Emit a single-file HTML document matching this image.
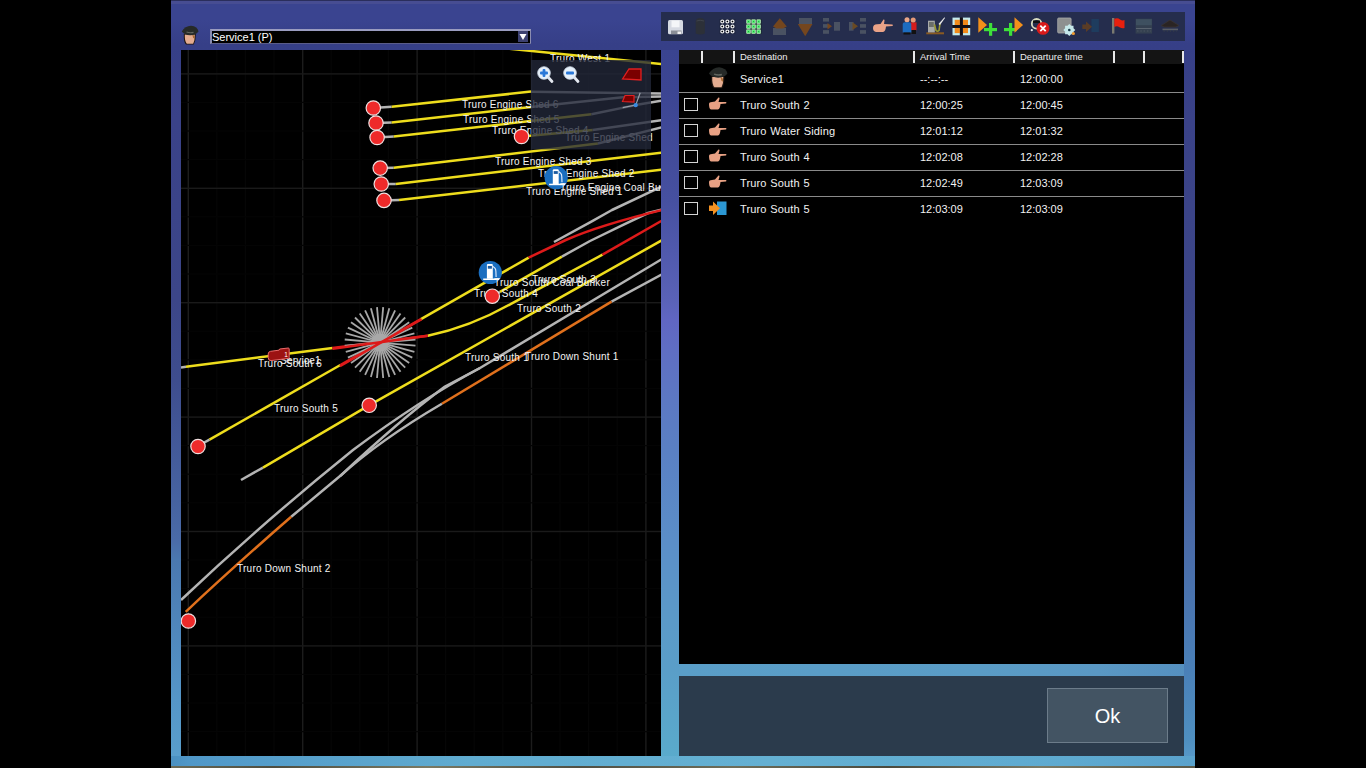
<!DOCTYPE html>
<html><head><meta charset="utf-8"><style>
*{margin:0;padding:0;box-sizing:border-box}
html,body{width:1366px;height:768px;overflow:hidden;background:#000;font-family:"Liberation Sans",sans-serif}
.abs{position:absolute}
#win{position:absolute;left:171px;top:0;width:1024px;height:766px;
 background:linear-gradient(to bottom,#3a4490 0px,#3a4490 20px,#363f87 45px,#3a4288 120px,#3c4688 300px,#3e4d8e 380px,#4a6ba8 540px,#4a80b8 670px,#4f8fc0 740px,#5a9ccc 766px);}
#ccol{position:absolute;left:661px;top:50px;width:18px;height:716px;
 background:linear-gradient(to bottom,#3a4490 0px,#3c4592 40px,#4650a0 150px,#5a62b8 250px,#6066c2 270px,#5f6ec4 300px,#5c78c4 350px,#5a80c4 400px,#5b8ec8 490px,#5b9ac8 570px,#5a9ec8 620px,#5aaccc 716px);}
#lmar{position:absolute;left:171px;top:500px;width:10px;height:266px;
 background:linear-gradient(to bottom,#46629f 0px,#4a6ba8 40px,#4a78b0 60px,#5596c8 200px,#5aa0cc 266px);}
#gap{position:absolute;left:679px;top:664px;width:505px;height:12px;
 background:linear-gradient(to right,#5a9ec8 0px,#5a9cc6 300px,#5a98c4 420px,#5590c0 505px);}
#bband{position:absolute;left:171px;top:756px;width:1024px;height:10px;
 background:linear-gradient(to right,#4a90c0 0px,#5098c8 20px,#60acd0 300px,#64b0d2 600px,#5eaad0 900px,#5aa2cc 1024px);}
#wintop{position:absolute;left:171px;top:0;width:1024px;height:1px;background:#2a2e5c}
#wintop2{position:absolute;left:171px;top:1px;width:1024px;height:3px;background:#474d92}
#tex{position:absolute;left:171px;top:766px;width:1024px;height:2px;background:linear-gradient(to right,#6a6a56,#4e4e40 10%,#7a7a64 25%,#505044 40%,#6e6e5a 55%,#4a4a3e 70%,#7a7a66 85%,#5a5a4a)}
#map{position:absolute;left:181px;top:50px;width:480px;height:706px;background:#000;overflow:hidden}
#tb{position:absolute;left:661px;top:12px;width:524px;height:29px;background:#252d4d}
#tbl{position:absolute;left:679px;top:50px;width:505px;height:614px;background:#000;overflow:hidden}
#hdr{position:absolute;left:0;top:0;width:505px;height:14px;background:#141414}
.vd{position:absolute;top:1px;width:1.6px;height:12px;background:#e8e8e8}
.ht{position:absolute;top:1px;font-size:9.5px;color:#ececec;line-height:12px}
.sep{position:absolute;left:0;width:505px;height:1px;background:#8a8a8a}
.rt{position:absolute;font-size:11px;color:#f2f2f2;line-height:13px;white-space:nowrap}
.rd{letter-spacing:0.15px;word-spacing:0.5px}
.cb{position:absolute;left:5px;width:14px;height:13px;border:1px solid #d4d4d4}
#bot{position:absolute;left:679px;top:676px;width:505px;height:80px;background:#2b3b4c}
#ok{position:absolute;left:368px;top:12px;width:121px;height:55px;background:#435463;border:1px solid #6c7c8a;color:#fff;font-size:20px;text-align:center;line-height:55px}
.ml{font-family:"Liberation Sans",sans-serif;font-size:10px;fill:#f4f4f4;letter-spacing:0.25px}
</style></head><body>
<div id="win"></div><div id="ccol"></div><div id="lmar"></div><div id="gap"></div><div id="bband"></div><div id="wintop"></div><div id="wintop2"></div><div id="tex"></div>
<svg class="abs" style="left:181px;top:25px" width="18" height="20" viewBox="0 0 18 20">
 <path d="M2.8,9 Q2.5,17 5,19.6 L12.8,19.6 Q15,15.5 14.8,9 Z" fill="#1e140e"/>
 <path d="M3.8,9.5 Q3.6,16.5 5.8,18.8 L12.2,18.8 Q14,15 13.8,9.5 Z" fill="#e4ac90"/>
 <path d="M11.2,9.5 Q14,10 13.6,14 L12,12.5 Z" fill="#a86a30"/>
 <path d="M0.8,6.5 Q4,1 10,0.8 Q16.5,1.5 17.5,6.5 Q15,10.3 9,10.2 Q3.5,10 0.8,6.5 Z" fill="#262a28"/>
 <path d="M5.5,7 Q9,8.3 12.5,7.3" stroke="#62665f" stroke-width="1.2" fill="none"/>
</svg>
<div class="abs" style="left:210px;top:29px;width:321px;height:15px;background:#000;border-top:2px solid #9a9cc0;border-left:2px solid #8a8cb0;border-right:1px solid #8a8cb0;border-bottom:1px solid #5a5c88"></div>
<div class="abs" style="left:212px;top:31px;font-size:11px;color:#fff;line-height:12px">Service1 (P)</div>
<div class="abs" style="left:518px;top:31px;width:10px;height:11px;background:#3c4070"><svg width="10" height="11" viewBox="0 0 10 11" style="display:block"><path d="M1.5 3 L8.5 3 L5 9 Z" fill="#fff"/></svg></div>
<div id="map"><svg width="480" height="706" viewBox="181 50 480 706" style="position:absolute;left:0;top:0"><rect x="187.6" y="50" width="1.4" height="706" fill="#1c1c1c"/><rect x="216.2" y="50" width="1.2" height="706" fill="#060606"/><rect x="244.8" y="50" width="1.2" height="706" fill="#060606"/><rect x="273.4" y="50" width="1.2" height="706" fill="#060606"/><rect x="302.0" y="50" width="1.4" height="706" fill="#1c1c1c"/><rect x="330.6" y="50" width="1.2" height="706" fill="#060606"/><rect x="359.2" y="50" width="1.2" height="706" fill="#060606"/><rect x="387.8" y="50" width="1.2" height="706" fill="#060606"/><rect x="416.4" y="50" width="1.4" height="706" fill="#1c1c1c"/><rect x="445.0" y="50" width="1.2" height="706" fill="#060606"/><rect x="473.6" y="50" width="1.2" height="706" fill="#060606"/><rect x="502.2" y="50" width="1.2" height="706" fill="#060606"/><rect x="530.8" y="50" width="1.4" height="706" fill="#1c1c1c"/><rect x="559.4" y="50" width="1.2" height="706" fill="#060606"/><rect x="588.0" y="50" width="1.2" height="706" fill="#060606"/><rect x="616.6" y="50" width="1.2" height="706" fill="#060606"/><rect x="645.2" y="50" width="1.4" height="706" fill="#1c1c1c"/><rect x="181" y="73.2" width="480" height="1.4" fill="#1a1a1a"/><rect x="181" y="101.8" width="480" height="1.2" fill="#040404"/><rect x="181" y="130.4" width="480" height="1.2" fill="#040404"/><rect x="181" y="159.0" width="480" height="1.2" fill="#040404"/><rect x="181" y="187.6" width="480" height="1.4" fill="#1a1a1a"/><rect x="181" y="216.2" width="480" height="1.2" fill="#040404"/><rect x="181" y="244.8" width="480" height="1.2" fill="#040404"/><rect x="181" y="273.4" width="480" height="1.2" fill="#040404"/><rect x="181" y="302.0" width="480" height="1.4" fill="#1a1a1a"/><rect x="181" y="330.6" width="480" height="1.2" fill="#040404"/><rect x="181" y="359.2" width="480" height="1.2" fill="#040404"/><rect x="181" y="387.8" width="480" height="1.2" fill="#040404"/><rect x="181" y="416.4" width="480" height="1.4" fill="#1a1a1a"/><rect x="181" y="445.0" width="480" height="1.2" fill="#040404"/><rect x="181" y="473.6" width="480" height="1.2" fill="#040404"/><rect x="181" y="502.2" width="480" height="1.2" fill="#040404"/><rect x="181" y="530.8" width="480" height="1.4" fill="#1a1a1a"/><rect x="181" y="559.4" width="480" height="1.2" fill="#040404"/><rect x="181" y="588.0" width="480" height="1.2" fill="#040404"/><rect x="181" y="616.6" width="480" height="1.2" fill="#040404"/><rect x="181" y="645.2" width="480" height="1.4" fill="#1a1a1a"/><rect x="181" y="673.8" width="480" height="1.2" fill="#040404"/><rect x="181" y="702.4" width="480" height="1.2" fill="#040404"/><rect x="181" y="731.0" width="480" height="1.2" fill="#040404"/><polyline points="500.0,47.8 662.0,64.2" fill="none" stroke="#eedd1c" stroke-width="2.5" stroke-linejoin="round"/><polyline points="373.0,108.0 391.7,106.7" fill="none" stroke="#b4b4b4" stroke-width="2.5" stroke-linejoin="round"/><polyline points="391.7,106.7 531.0,91.6" fill="none" stroke="#eedd1c" stroke-width="2.5" stroke-linejoin="round"/><polyline points="531.0,91.8 662.0,93.5" fill="none" stroke="#b4b4b4" stroke-width="2.5" stroke-linejoin="round"/><polyline points="376.0,123.0 391.7,122.5" fill="none" stroke="#b4b4b4" stroke-width="2.5" stroke-linejoin="round"/><polyline points="391.7,122.5 531.0,107.0" fill="none" stroke="#eedd1c" stroke-width="2.5" stroke-linejoin="round"/><polyline points="531.0,107.0 622.7,97.3 662.0,96.5" fill="none" stroke="#b4b4b4" stroke-width="2.5" stroke-linejoin="round"/><polyline points="377.0,137.5 393.8,136.5" fill="none" stroke="#b4b4b4" stroke-width="2.5" stroke-linejoin="round"/><polyline points="393.8,136.5 591.4,114.2" fill="none" stroke="#eedd1c" stroke-width="2.5" stroke-linejoin="round"/><polyline points="591.4,114.2 635.7,105.1 662.0,100.6" fill="none" stroke="#b4b4b4" stroke-width="2.5" stroke-linejoin="round"/><polyline points="521.5,136.5 592.7,129.9" fill="none" stroke="#eedd1c" stroke-width="2.5" stroke-linejoin="round"/><polyline points="592.7,129.9 662.0,120.0" fill="none" stroke="#b4b4b4" stroke-width="2.5" stroke-linejoin="round"/><polyline points="380.0,168.0 393.8,167.7" fill="none" stroke="#b4b4b4" stroke-width="2.5" stroke-linejoin="round"/><polyline points="393.8,167.7 597.9,143.5" fill="none" stroke="#eedd1c" stroke-width="2.5" stroke-linejoin="round"/><polyline points="597.9,143.5 662.0,127.3" fill="none" stroke="#b4b4b4" stroke-width="2.5" stroke-linejoin="round"/><polyline points="381.0,184.0 395.8,184.0" fill="none" stroke="#b4b4b4" stroke-width="2.5" stroke-linejoin="round"/><polyline points="395.8,184.0 662.0,152.6" fill="none" stroke="#eedd1c" stroke-width="2.5" stroke-linejoin="round"/><polyline points="384.0,200.4 399.0,200.0" fill="none" stroke="#b4b4b4" stroke-width="2.5" stroke-linejoin="round"/><polyline points="399.0,200.0 662.0,169.6" fill="none" stroke="#eedd1c" stroke-width="2.5" stroke-linejoin="round"/><polyline points="662.0,186.5 612.0,210.0 590.0,222.4 554.0,242.0" fill="none" stroke="#b4b4b4" stroke-width="2.5" stroke-linejoin="round"/><polyline points="492.3,296.2 500.0,291.8" fill="none" stroke="#b4b4b4" stroke-width="2.5" stroke-linejoin="round"/><polyline points="500.0,291.8 561.9,256.6" fill="none" stroke="#eedd1c" stroke-width="2.5" stroke-linejoin="round"/><polyline points="561.9,256.6 590.0,241.0 620.0,226.3 648.0,213.0 662.0,209.5" fill="none" stroke="#b4b4b4" stroke-width="2.5" stroke-linejoin="round"/><polyline points="198.0,446.0 209.5,439.6" fill="none" stroke="#b4b4b4" stroke-width="2.5" stroke-linejoin="round"/><polyline points="209.5,439.6 340.4,365.0" fill="none" stroke="#eedd1c" stroke-width="2.5" stroke-linejoin="round"/><polyline points="340.4,365.0 420.5,319.4" fill="none" stroke="#dd1a1a" stroke-width="2.5" stroke-linejoin="round"/><polyline points="420.5,319.4 528.7,257.6" fill="none" stroke="#eedd1c" stroke-width="2.5" stroke-linejoin="round"/><path d="M528.7,257.6 L565.8,240 Q600,225 662,210" fill="none" stroke="#dd1a1a" stroke-width="2.5" stroke-linejoin="round"/><polyline points="181.0,367.5 186.0,366.8" fill="none" stroke="#b4b4b4" stroke-width="2.5" stroke-linejoin="round"/><polyline points="186.0,366.8 332.6,348.0" fill="none" stroke="#eedd1c" stroke-width="2.5" stroke-linejoin="round"/><polyline points="332.6,348.0 427.8,335.7" fill="none" stroke="#dd1a1a" stroke-width="2.5" stroke-linejoin="round"/><path d="M427.8,335.7 Q470,327 511,303.8 L602.5,254.7" fill="none" stroke="#eedd1c" stroke-width="2.5" stroke-linejoin="round"/><polyline points="602.5,254.7 662.0,220.6" fill="none" stroke="#dd1a1a" stroke-width="2.5" stroke-linejoin="round"/><polyline points="241.0,480.0 263.0,467.6" fill="none" stroke="#b4b4b4" stroke-width="2.5" stroke-linejoin="round"/><polyline points="263.0,467.6 369.0,405.3 662.0,240.2" fill="none" stroke="#eedd1c" stroke-width="2.5" stroke-linejoin="round"/><path d="M662,259 L480,368 Q420,400 353,450 Q260,525 181,600" fill="none" stroke="#b4b4b4" stroke-width="2.5" stroke-linejoin="round"/><path d="M480,368 L445,386.6 Q400,420 340.4,475.8 L291.2,516.8" fill="none" stroke="#b4b4b4" stroke-width="2.5" stroke-linejoin="round"/><path d="M291.2,516.8 Q230,570 185.7,611.8" fill="none" stroke="#e0701c" stroke-width="2.5" stroke-linejoin="round"/><polyline points="662.0,274.4 611.5,301.6" fill="none" stroke="#b4b4b4" stroke-width="2.5" stroke-linejoin="round"/><polyline points="611.5,301.6 441.9,403.8" fill="none" stroke="#e0701c" stroke-width="2.5" stroke-linejoin="round"/><path d="M441.9,403.75 Q380,440 340.4,475.8" fill="none" stroke="#b4b4b4" stroke-width="2.5" stroke-linejoin="round"/><line x1="388.1" y1="343.3" x2="415.5" y2="345.7" stroke="#a8a8a8" stroke-width="1.8"/><line x1="387.8" y1="344.7" x2="414.4" y2="351.8" stroke="#a8a8a8" stroke-width="1.8"/><line x1="387.4" y1="346.0" x2="412.3" y2="357.6" stroke="#a8a8a8" stroke-width="1.8"/><line x1="386.7" y1="347.2" x2="409.2" y2="363.0" stroke="#a8a8a8" stroke-width="1.8"/><line x1="385.8" y1="348.3" x2="405.2" y2="367.7" stroke="#a8a8a8" stroke-width="1.8"/><line x1="384.7" y1="349.2" x2="400.5" y2="371.7" stroke="#a8a8a8" stroke-width="1.8"/><line x1="383.5" y1="349.9" x2="395.1" y2="374.8" stroke="#a8a8a8" stroke-width="1.8"/><line x1="382.2" y1="350.3" x2="389.3" y2="376.9" stroke="#a8a8a8" stroke-width="1.8"/><line x1="380.8" y1="350.6" x2="383.2" y2="378.0" stroke="#a8a8a8" stroke-width="1.8"/><line x1="379.4" y1="350.6" x2="377.0" y2="378.0" stroke="#a8a8a8" stroke-width="1.8"/><line x1="378.0" y1="350.3" x2="370.9" y2="376.9" stroke="#a8a8a8" stroke-width="1.8"/><line x1="376.7" y1="349.9" x2="365.1" y2="374.8" stroke="#a8a8a8" stroke-width="1.8"/><line x1="375.5" y1="349.2" x2="359.7" y2="371.7" stroke="#a8a8a8" stroke-width="1.8"/><line x1="374.4" y1="348.3" x2="355.0" y2="367.7" stroke="#a8a8a8" stroke-width="1.8"/><line x1="373.5" y1="347.2" x2="351.0" y2="363.0" stroke="#a8a8a8" stroke-width="1.8"/><line x1="372.8" y1="346.0" x2="347.9" y2="357.6" stroke="#a8a8a8" stroke-width="1.8"/><line x1="372.4" y1="344.7" x2="345.8" y2="351.8" stroke="#a8a8a8" stroke-width="1.8"/><line x1="372.1" y1="343.3" x2="344.7" y2="345.7" stroke="#a8a8a8" stroke-width="1.8"/><line x1="372.1" y1="341.9" x2="344.7" y2="339.5" stroke="#a8a8a8" stroke-width="1.8"/><line x1="372.4" y1="340.5" x2="345.8" y2="333.4" stroke="#a8a8a8" stroke-width="1.8"/><line x1="372.8" y1="339.2" x2="347.9" y2="327.6" stroke="#a8a8a8" stroke-width="1.8"/><line x1="373.5" y1="338.0" x2="351.0" y2="322.2" stroke="#a8a8a8" stroke-width="1.8"/><line x1="374.4" y1="336.9" x2="355.0" y2="317.5" stroke="#a8a8a8" stroke-width="1.8"/><line x1="375.5" y1="336.0" x2="359.7" y2="313.5" stroke="#a8a8a8" stroke-width="1.8"/><line x1="376.7" y1="335.3" x2="365.1" y2="310.4" stroke="#a8a8a8" stroke-width="1.8"/><line x1="378.0" y1="334.9" x2="370.9" y2="308.3" stroke="#a8a8a8" stroke-width="1.8"/><line x1="379.4" y1="334.6" x2="377.0" y2="307.2" stroke="#a8a8a8" stroke-width="1.8"/><line x1="380.8" y1="334.6" x2="383.2" y2="307.2" stroke="#a8a8a8" stroke-width="1.8"/><line x1="382.2" y1="334.9" x2="389.3" y2="308.3" stroke="#a8a8a8" stroke-width="1.8"/><line x1="383.5" y1="335.3" x2="395.1" y2="310.4" stroke="#a8a8a8" stroke-width="1.8"/><line x1="384.7" y1="336.0" x2="400.5" y2="313.5" stroke="#a8a8a8" stroke-width="1.8"/><line x1="385.8" y1="336.9" x2="405.2" y2="317.5" stroke="#a8a8a8" stroke-width="1.8"/><line x1="386.7" y1="338.0" x2="409.2" y2="322.2" stroke="#a8a8a8" stroke-width="1.8"/><line x1="387.4" y1="339.2" x2="412.3" y2="327.6" stroke="#a8a8a8" stroke-width="1.8"/><line x1="387.8" y1="340.5" x2="414.4" y2="333.4" stroke="#a8a8a8" stroke-width="1.8"/><line x1="388.1" y1="341.9" x2="415.5" y2="339.5" stroke="#a8a8a8" stroke-width="1.8"/><circle cx="380.1" cy="342.6" r="9" fill="#a8a8a8"/><polyline points="332.5,348.8 427.8,335.8" fill="none" stroke="#dd1a1a" stroke-width="2.5" stroke-linejoin="round"/><polyline points="339.9,366.2 421.6,319.1" fill="none" stroke="#dd1a1a" stroke-width="2.5" stroke-linejoin="round"/><text class="ml" x="550" y="62">Truro West 1</text><text class="ml" x="462" y="108">Truro Engine Shed 6</text><text class="ml" x="463" y="123">Truro Engine Shed 5</text><text class="ml" x="492" y="134">Truro Engine Shed 4</text><text class="ml" x="565" y="141">Truro Engine Shed</text><text class="ml" x="495" y="165">Truro Engine Shed 3</text><text class="ml" x="538" y="177">Truro Engine Shed 2</text><text class="ml" x="526" y="195">Truro Engine Shed 1</text><text class="ml" x="532" y="283">Truro South 3</text><text class="ml" x="474" y="297">Truro South 4</text><text class="ml" x="517" y="312">Truro South 2</text><text class="ml" x="280" y="364">Service1</text><text class="ml" x="258" y="367">Truro South 6</text><text class="ml" x="274" y="412">Truro South 5</text><text class="ml" x="465" y="361">Truro South 1</text><text class="ml" x="525" y="360">Truro Down Shunt 1</text><text class="ml" x="237" y="572">Truro Down Shunt 2</text><circle cx="373.3" cy="108" r="7.2" fill="#ee2a2a" stroke="#f0e0e0" stroke-width="1.2"/><circle cx="376" cy="123" r="7.2" fill="#ee2a2a" stroke="#f0e0e0" stroke-width="1.2"/><circle cx="377.1" cy="137.5" r="7.2" fill="#ee2a2a" stroke="#f0e0e0" stroke-width="1.2"/><circle cx="380.2" cy="168.1" r="7.2" fill="#ee2a2a" stroke="#f0e0e0" stroke-width="1.2"/><circle cx="381.25" cy="184" r="7.2" fill="#ee2a2a" stroke="#f0e0e0" stroke-width="1.2"/><circle cx="384" cy="200.4" r="7.2" fill="#ee2a2a" stroke="#f0e0e0" stroke-width="1.2"/><circle cx="521.5" cy="136.5" r="7.2" fill="#ee2a2a" stroke="#f0e0e0" stroke-width="1.2"/><circle cx="492.3" cy="296.2" r="7.2" fill="#ee2a2a" stroke="#f0e0e0" stroke-width="1.2"/><circle cx="369.2" cy="405.3" r="7.2" fill="#ee2a2a" stroke="#f0e0e0" stroke-width="1.2"/><circle cx="198" cy="446.5" r="7.2" fill="#ee2a2a" stroke="#f0e0e0" stroke-width="1.2"/><circle cx="188.4" cy="621" r="7.2" fill="#ee2a2a" stroke="#f0e0e0" stroke-width="1.2"/><g transform="translate(490.3,272.5)"><circle r="11.6" fill="#1a6ec0"/>
<path d="M-3.4,-7.4 Q-3.4,-8.4 -2.4,-8.4 L1.5,-8.4 Q2.5,-8.4 2.5,-7.4 L2.5,6.2 L-3.4,6.2 Z" fill="#fff"/><rect x="-2.5" y="-6.6" width="4.1" height="2.8" fill="#1a5aa0"/>
<path d="M2.5,-6.2 L4.6,-4.4 Q5.6,-3.2 5.6,-1 L5.8,4.5" stroke="#e8f0ff" stroke-width="1.1" fill="none"/>
<rect x="-7.1" y="6" width="16" height="1.5" fill="#fff"/></g><g transform="translate(556.2,177.7)"><circle r="11.6" fill="#1a6ec0"/>
<path d="M-3.4,-7.4 Q-3.4,-8.4 -2.4,-8.4 L1.5,-8.4 Q2.5,-8.4 2.5,-7.4 L2.5,6.2 L-3.4,6.2 Z" fill="#fff"/><rect x="-2.5" y="-6.6" width="4.1" height="2.8" fill="#1a5aa0"/>
<path d="M2.5,-6.2 L4.6,-4.4 Q5.6,-3.2 5.6,-1 L5.8,4.5" stroke="#e8f0ff" stroke-width="1.1" fill="none"/>
<rect x="-7.1" y="6" width="16" height="1.5" fill="#fff"/></g><text class="ml" x="560" y="191">Truro Engine Coal Bunker</text><text class="ml" x="494" y="286">Truro South Coal Bunker</text><path d="M270.5,351.3 L279,350.2 L279.6,349 L288.3,348 Q289.2,348 289.2,349 L289.2,357.6 Q289.2,358.3 288.4,358.4 L271,360.6 Q268.2,360.8 268.2,357.5 L268.2,354 Q268.3,351.6 270.5,351.3 Z" fill="#9c1212" stroke="#ea6a6a" stroke-width="1"/><text x="284.3" y="356.6" font-size="6.5" fill="#fff" font-family="Liberation Sans">1</text><rect x="531" y="60" width="120" height="89.4" fill="#23283a" fill-opacity="0.78"/><g transform="translate(544,73)"><line x1="4" y1="4" x2="8" y2="8.5" stroke="#e4e8f0" stroke-width="2.8" stroke-linecap="round"/><circle r="6.3" fill="#e6f0fa" stroke="#d0dcea" stroke-width="0.8"/><rect x="-4" y="-1.4" width="8" height="2.8" rx="1" fill="#2a78d8"/><rect x="-1.4" y="-4" width="2.8" height="8" rx="1" fill="#2a78d8"/></g><g transform="translate(570,73)"><line x1="4" y1="4" x2="8" y2="8.5" stroke="#e4e8f0" stroke-width="2.8" stroke-linecap="round"/><circle r="6.3" fill="#e6f0fa" stroke="#d0dcea" stroke-width="0.8"/><rect x="-4" y="-1.4" width="8" height="2.8" rx="1" fill="#2a78d8"/></g><path d="M622.5,79 L629,69 L641,69 L641,80 Z" fill="#7a0000" stroke="#e02020" stroke-width="1.3"/><path d="M622.5,101.5 L625,95.5 L634,95.5 L634,102 Z" fill="#7a0000" stroke="#e02020" stroke-width="1.2"/><polyline points="622.7,107.7 635.7,105.1 640.2,92.8" fill="none" stroke="#9aa0aa" stroke-width="1.2"/><circle cx="635.7" cy="105.1" r="2.2" fill="#3a8ae0"/></svg></div>
<div id="tb"><svg width="524" height="29" viewBox="661 12 524 29" style="position:absolute;left:0;top:0"><rect x="668" y="20" width="15" height="14.2" rx="1.5" fill="#d6dae2"/><rect x="671.5" y="20.5" width="8" height="6.8" fill="#f4f6f8"/><rect x="671" y="30.5" width="10.5" height="3.5" fill="#8a8e96"/><rect x="677.5" y="31.5" width="3.5" height="2.5" fill="#f0f0f0"/><path d="M695.7,21.5 Q695.7,18 700.2,18 Q704.8,18 704.8,21.5 L704.8,33.5 Q700.2,35.5 695.7,33.5 Z" fill="#2c3038"/><path d="M696.5,21 Q700,19.5 704,21" stroke="#3e434c" stroke-width="1" fill="none"/><rect x="719.5" y="19" width="16" height="15" fill="#1c2238" opacity="0.6"/><circle cx="722.3" cy="21.5" r="1.45" fill="none" stroke="#ececec" stroke-width="1.3"/><circle cx="722.3" cy="21.5" r="0.7" fill="#000"/><circle cx="722.3" cy="26.5" r="1.45" fill="none" stroke="#ececec" stroke-width="1.3"/><circle cx="722.3" cy="26.5" r="0.7" fill="#000"/><circle cx="722.3" cy="31.5" r="1.45" fill="none" stroke="#ececec" stroke-width="1.3"/><circle cx="722.3" cy="31.5" r="0.7" fill="#000"/><circle cx="727.4" cy="21.5" r="1.45" fill="none" stroke="#ececec" stroke-width="1.3"/><circle cx="727.4" cy="21.5" r="0.7" fill="#000"/><circle cx="727.4" cy="26.5" r="1.45" fill="none" stroke="#ececec" stroke-width="1.3"/><circle cx="727.4" cy="26.5" r="0.7" fill="#000"/><circle cx="727.4" cy="31.5" r="1.45" fill="none" stroke="#ececec" stroke-width="1.3"/><circle cx="727.4" cy="31.5" r="0.7" fill="#000"/><circle cx="732.5" cy="21.5" r="1.45" fill="none" stroke="#ececec" stroke-width="1.3"/><circle cx="732.5" cy="21.5" r="0.7" fill="#000"/><circle cx="732.5" cy="26.5" r="1.45" fill="none" stroke="#ececec" stroke-width="1.3"/><circle cx="732.5" cy="26.5" r="0.7" fill="#000"/><circle cx="732.5" cy="31.5" r="1.45" fill="none" stroke="#ececec" stroke-width="1.3"/><circle cx="732.5" cy="31.5" r="0.7" fill="#000"/><rect x="746" y="19" width="15.5" height="15" fill="#101a18" opacity="0.7"/><rect x="746.7" y="19.8" width="3.6" height="3.6" fill="#56ee74" stroke="#d8ffd8" stroke-width="0.6"/><rect x="748.0" y="21.1" width="1" height="1" fill="#1a9a3a"/><rect x="746.7" y="24.8" width="3.6" height="3.6" fill="#56ee74" stroke="#d8ffd8" stroke-width="0.6"/><rect x="748.0" y="26.1" width="1" height="1" fill="#1a9a3a"/><rect x="746.7" y="29.8" width="3.6" height="3.6" fill="#56ee74" stroke="#d8ffd8" stroke-width="0.6"/><rect x="748.0" y="31.1" width="1" height="1" fill="#1a9a3a"/><rect x="751.8" y="19.8" width="3.6" height="3.6" fill="#56ee74" stroke="#d8ffd8" stroke-width="0.6"/><rect x="753.1" y="21.1" width="1" height="1" fill="#1a9a3a"/><rect x="751.8" y="24.8" width="3.6" height="3.6" fill="#56ee74" stroke="#d8ffd8" stroke-width="0.6"/><rect x="753.1" y="26.1" width="1" height="1" fill="#1a9a3a"/><rect x="751.8" y="29.8" width="3.6" height="3.6" fill="#56ee74" stroke="#d8ffd8" stroke-width="0.6"/><rect x="753.1" y="31.1" width="1" height="1" fill="#1a9a3a"/><rect x="756.9" y="19.8" width="3.6" height="3.6" fill="#56ee74" stroke="#d8ffd8" stroke-width="0.6"/><rect x="758.2" y="21.1" width="1" height="1" fill="#1a9a3a"/><rect x="756.9" y="24.8" width="3.6" height="3.6" fill="#56ee74" stroke="#d8ffd8" stroke-width="0.6"/><rect x="758.2" y="26.1" width="1" height="1" fill="#1a9a3a"/><rect x="756.9" y="29.8" width="3.6" height="3.6" fill="#56ee74" stroke="#d8ffd8" stroke-width="0.6"/><rect x="758.2" y="31.1" width="1" height="1" fill="#1a9a3a"/><rect x="773" y="28" width="13" height="7" fill="#4a5262"/><path d="M773,26.5 L779.8,18.2 L786.8,26.5 L783,28.5 L776.5,28.5 Z" fill="#74461e"/><rect x="799" y="18" width="13" height="6.5" fill="#4a5262"/><path d="M797.8,24 L812.5,24 L805.2,36.2 Z" fill="#74461e"/><rect x="823" y="18" width="6" height="3.6" fill="#4a5262"/><rect x="823" y="24.1" width="6" height="3.7" fill="#4a5262"/><rect x="823" y="30.1" width="6" height="3.7" fill="#4a5262"/><rect x="834" y="22" width="6" height="8.7" fill="#4a5262"/><path d="M827.5,23 L832,26.2 L827.5,29.5 Z" fill="#74461e"/><rect x="860" y="18" width="6" height="3.6" fill="#4a5262"/><rect x="860" y="24.1" width="6" height="3.7" fill="#4a5262"/><rect x="860" y="30.1" width="6" height="3.7" fill="#4a5262"/><rect x="849" y="22" width="4.5" height="8.7" fill="#4a5262"/><path d="M852.5,22.3 L858,26.2 L852.5,30 Z" fill="#6a4a22"/><path d="M873,28 Q873,24.5 877,24.3 L880.5,24 L883.5,19.5 Q884.5,19 884.5,20.5 L884,24 L892.5,24.6 Q893.3,25.4 892.5,26 L886,26.5 Q885.5,31.5 883,32 L876,32 Q873,31.5 873,28 Z" fill="#eaa287"/><rect x="910.5" y="22.3" width="6" height="8" fill="#d61c1c"/><rect x="911.5" y="30" width="4.5" height="4" fill="#111"/><circle cx="913.2" cy="20" r="2.5" fill="#e69a78"/><path d="M902.7,24 Q902.7,22.3 905,22.3 L909,22.3 Q911.3,22.3 911.3,24 L911.3,32.6 L902.7,32.6 Z" fill="#1c6cc0"/><rect x="903.5" y="32.5" width="7" height="2" fill="#111"/><circle cx="907" cy="19.8" r="2.5" fill="#eaa688"/><rect x="926.3" y="32.3" width="17.7" height="2" fill="#8a5a20"/><rect x="928" y="20.7" width="6.8" height="11.7" fill="#a8aaa8"/><rect x="929" y="22" width="4.8" height="5" fill="#6a6e6a"/><path d="M934.5,24.5 L936,30.5 Q937.5,32 939,30.5 L940,23.5" stroke="#9a9a30" stroke-width="1.6" fill="none"/><path d="M938.5,24 L944.5,17.2 L945,18 L940,25 Z" fill="#e6e6e6"/><rect x="952.5" y="17.6" width="7.4" height="7.4" fill="#c4eaee"/><rect x="954.7" y="19.8" width="5.2" height="5.2" fill="#f28a1a"/><rect x="962.8" y="17.6" width="7.4" height="7.4" fill="#c4eaee"/><rect x="962.8" y="19.8" width="5.2" height="5.2" fill="#f28a1a"/><rect x="952.5" y="27.9" width="7.4" height="7.4" fill="#c4eaee"/><rect x="954.7" y="27.9" width="5.2" height="5.2" fill="#f28a1a"/><rect x="962.8" y="27.9" width="7.4" height="7.4" fill="#c4eaee"/><rect x="962.8" y="27.9" width="5.2" height="5.2" fill="#f28a1a"/><rect x="959.9" y="17.6" width="2.9" height="17.7" fill="#141014"/><rect x="952.5" y="25" width="17.7" height="2.9" fill="#141014"/><path d="M978.3,17.3 L987,25 L978.3,32.7 Z" fill="#f4901a"/><rect x="984" y="28" width="13" height="3.2" fill="#3ee03a"/><rect x="989" y="23" width="3.2" height="12.8" fill="#3ee03a"/><rect x="1004" y="28" width="13" height="3.2" fill="#3ee03a"/><rect x="1009" y="23" width="3.2" height="12.8" fill="#3ee03a"/><path d="M1014.5,17.3 L1023.1,25 L1014.5,32.7 Z" fill="#f4901a"/><circle cx="1036.6" cy="23.8" r="4.8" fill="none" stroke="#d8dcc0" stroke-width="1.8"/><rect x="1033" y="20.5" width="7" height="2.5" fill="#111"/><circle cx="1031.8" cy="30.2" r="1.1" fill="#eee"/><circle cx="1043" cy="28.4" r="6.4" fill="#d81a1a"/><path d="M1040.3,25.7 L1045.7,31.1 M1045.7,25.7 L1040.3,31.1" stroke="#fff" stroke-width="1.8"/><rect x="1057.7" y="18" width="13.4" height="15" rx="1" fill="#8e9090" stroke="#a8aaaa" stroke-width="0.8"/><polygon points="1075.3,30.0 1073.5,31.8 1073.5,34.2 1071.1,34.2 1069.3,36.0 1067.5,34.2 1065.1,34.2 1065.1,31.8 1063.3,30.0 1065.1,28.2 1065.1,25.8 1067.5,25.8 1069.3,24.0 1071.1,25.8 1073.5,25.8 1073.5,28.2" fill="#c6e8ea"/><circle cx="1069.3" cy="30" r="1.3" fill="#1a3a4a"/><circle cx="1073.4" cy="33.5" r="1.6" fill="#f09a30"/><rect x="1091.4" y="19" width="7.5" height="13" fill="#1e3c5e"/><path d="M1082.3,24.5 L1086,24.5 L1086,21.6 L1092,26.7 L1086,31.9 L1086,29 L1082.3,29 Z" fill="#5a3c26"/><rect x="1112" y="18" width="2.4" height="15.6" fill="#7a7a70"/><path d="M1114.3,18.7 Q1118,17.5 1120,19.5 Q1122.5,21 1124.5,20 L1124.5,28 Q1122,28.8 1119.5,27.2 Q1117,25.5 1114.3,27 Z" fill="#e8200e"/><rect x="1135.6" y="18.7" width="16.5" height="14.9" fill="#344050"/><rect x="1136" y="19.2" width="15.7" height="6" fill="#3e5060"/><path d="M1136,28.5 L1151.5,28.5" stroke="#5a6470" stroke-width="1"/><path d="M1137,31 L1151,31" stroke="#4a5460" stroke-width="1.2" stroke-dasharray="1.5 1.8"/><path d="M1161.3,25.5 L1170,20 L1179,25.5 L1176,27 L1164,27 Z" fill="#2a2424" stroke="#3a3434" stroke-width="0.8"/><rect x="1162.5" y="28.6" width="15.5" height="1.6" fill="#5a5e66"/><path d="M1163.5,31 L1177,31" stroke="#3a4048" stroke-width="1.2" stroke-dasharray="1.2 2"/></svg></div>
<div id="tbl"><div id="hdr">
<div class="vd" style="left:22px"></div>
<div class="vd" style="left:54px"></div>
<div class="vd" style="left:234px"></div>
<div class="vd" style="left:334px"></div>
<div class="vd" style="left:434px"></div>
<div class="vd" style="left:464px"></div>
<div class="vd" style="left:503px"></div>
<div class="ht" style="left:61px">Destination</div><div class="ht" style="left:241px">Arrival Time</div><div class="ht" style="left:341px">Departure time</div>
</div>
<div class="rt rd" style="left:61px;top:23.3px">Service1</div>
<div class="rt" style="left:241px;top:23.3px">--:--:--</div>
<div class="rt" style="left:341px;top:23.3px">12:00:00</div>
<svg class="abs" style="left:29px;top:16px" width="20" height="23" viewBox="0 0 18 20">
 <path d="M2.8,9 Q2.5,17 5,19.6 L12.8,19.6 Q15,15.5 14.8,9 Z" fill="#1e140e"/>
 <path d="M3.8,9.5 Q3.6,16.5 5.8,18.8 L12.2,18.8 Q14,15 13.8,9.5 Z" fill="#e4ac90"/>
 <path d="M11.2,9.5 Q14,10 13.6,14 L12,12.5 Z" fill="#a86a30"/>
 <path d="M0.8,6.5 Q4,1 10,0.8 Q16.5,1.5 17.5,6.5 Q15,10.3 9,10.2 Q3.5,10 0.8,6.5 Z" fill="#262a28"/>
 <path d="M5.5,7 Q9,8.3 12.5,7.3" stroke="#62665f" stroke-width="1.2" fill="none"/>
</svg>
<div class="sep" style="top:42px"></div>
<div class="cb" style="top:47.8px"></div>
<div class="rt rd" style="left:61px;top:49.3px">Truro South 2</div>
<div class="rt" style="left:241px;top:49.3px">12:00:25</div>
<div class="rt" style="left:341px;top:49.3px">12:00:45</div>
<svg class="abs" style="left:29px;top:46.5px" width="20" height="14" viewBox="0 0 20 14">
<path d="M1,7 Q1,5 4,5 L7,4.5 L10.5,0.5 Q11.5,0 11.5,1.5 L10.5,5 L18,5 Q19,5.8 18,6.5 L12.5,7 Q12,12 10,12.5 L3,12.5 Q1,12 1,7 Z" fill="#e8a184"/></svg>
<div class="sep" style="top:68px"></div>
<div class="cb" style="top:73.8px"></div>
<div class="rt rd" style="left:61px;top:75.3px">Truro Water Siding</div>
<div class="rt" style="left:241px;top:75.3px">12:01:12</div>
<div class="rt" style="left:341px;top:75.3px">12:01:32</div>
<svg class="abs" style="left:29px;top:72.5px" width="20" height="14" viewBox="0 0 20 14">
<path d="M1,7 Q1,5 4,5 L7,4.5 L10.5,0.5 Q11.5,0 11.5,1.5 L10.5,5 L18,5 Q19,5.8 18,6.5 L12.5,7 Q12,12 10,12.5 L3,12.5 Q1,12 1,7 Z" fill="#e8a184"/></svg>
<div class="sep" style="top:94px"></div>
<div class="cb" style="top:99.8px"></div>
<div class="rt rd" style="left:61px;top:101.3px">Truro South 4</div>
<div class="rt" style="left:241px;top:101.3px">12:02:08</div>
<div class="rt" style="left:341px;top:101.3px">12:02:28</div>
<svg class="abs" style="left:29px;top:98.5px" width="20" height="14" viewBox="0 0 20 14">
<path d="M1,7 Q1,5 4,5 L7,4.5 L10.5,0.5 Q11.5,0 11.5,1.5 L10.5,5 L18,5 Q19,5.8 18,6.5 L12.5,7 Q12,12 10,12.5 L3,12.5 Q1,12 1,7 Z" fill="#e8a184"/></svg>
<div class="sep" style="top:120px"></div>
<div class="cb" style="top:125.8px"></div>
<div class="rt rd" style="left:61px;top:127.3px">Truro South 5</div>
<div class="rt" style="left:241px;top:127.3px">12:02:49</div>
<div class="rt" style="left:341px;top:127.3px">12:03:09</div>
<svg class="abs" style="left:29px;top:124.5px" width="20" height="14" viewBox="0 0 20 14">
<path d="M1,7 Q1,5 4,5 L7,4.5 L10.5,0.5 Q11.5,0 11.5,1.5 L10.5,5 L18,5 Q19,5.8 18,6.5 L12.5,7 Q12,12 10,12.5 L3,12.5 Q1,12 1,7 Z" fill="#e8a184"/></svg>
<div class="sep" style="top:146px"></div>
<div class="cb" style="top:151.8px"></div>
<div class="rt rd" style="left:61px;top:153.3px">Truro South 5</div>
<div class="rt" style="left:241px;top:153.3px">12:03:09</div>
<div class="rt" style="left:341px;top:153.3px">12:03:09</div>
<svg class="abs" style="left:28.5px;top:150.5px" width="20" height="16" viewBox="0 0 20 16">
<rect x="9" y="0.5" width="9.5" height="13.5" fill="#2c98d4"/>
<path d="M1,4.5 L5,4.5 L5,0.5 L12,7.2 L5,14 L5,10 L1,10 Z" fill="#f49222"/></svg>
</div>
<div id="bot"><div id="ok">Ok</div></div>
</body></html>
